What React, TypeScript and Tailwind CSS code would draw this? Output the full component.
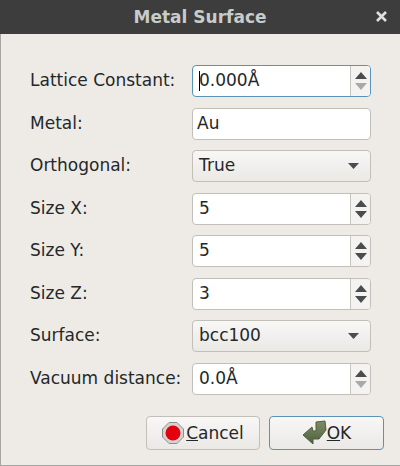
import { ReactNode } from "react";

const Spin = ({ value, focused, dim, caret }: { value: string; focused?: boolean; dim?: boolean; caret?: boolean }) => (
  <div className={`flex h-[32px] w-[179px] overflow-hidden rounded-[4px] border bg-white ${focused ? "border-[#5b93b8]" : "border-[#c2bfb9]"}`}>
    <div className="relative flex flex-1 items-center pl-[6px]">
      {caret && <span className="absolute left-[6px] top-[5px] h-[20px] w-px bg-black" />}
      {value}
    </div>
    <div className="flex w-[20px] flex-col items-center justify-center gap-[4px] border-l border-[#c8c5bf] bg-[#f4f3f1]">
      <svg width="12" height="7" viewBox="0 0 12 7"><path d="M6 0 12 7H0z" fill="#4a4d4d" /></svg>
      <svg width="12" height="7" viewBox="0 0 12 7"><path d="M0 0h12L6 7z" fill={focused || dim ? "#a9a9a7" : "#4a4d4d"} /></svg>
    </div>
  </div>
);

const Combo = ({ value }: { value: string }) => (
  <div className="flex h-[32px] w-[179px] items-center justify-between rounded-[4px] border border-[#c2bfb9] bg-gradient-to-b from-[#f8f7f6] to-[#ebe9e6] pl-[6px] pr-[11px]">
    {value}
    <svg width="11" height="6" viewBox="0 0 11 6"><path d="M0 0h11L5.500 6z" fill="#4a4d4d" /></svg>
  </div>
);

const Row = ({ label, children }: { label: string; children: ReactNode }) => (
  <div className="flex h-[32px] items-center justify-between">
    <span>{label}</span>
    {children}
  </div>
);

export default function App() {
  return (
    <div className="flex h-[466px] w-[400px] flex-col overflow-hidden border-b border-[#a8a6a2] bg-[#eeebe7] font-['DejaVu_Sans',sans-serif] text-[17px] text-[#23282a]">
      <div className="relative flex h-[34px] items-center justify-center bg-[#3d3d3d] pt-[1px] text-[17px] font-bold text-[#c8ccc9]">
        Metal Surface
        <span className="absolute right-[12px] top-[10px]">
          <svg width="13" height="13" viewBox="0 0 13 13"><path d="M2 2l9 9M11 2l-9 9" stroke="#e0e0de" strokeWidth="2.600" /></svg>
        </span>
      </div>
      <div className="flex flex-1 flex-col border-l border-[#a8a6a2] pl-[29px] pr-[29px] pt-[31px]">
        <div className="flex flex-col gap-[10.500px]">
          <Row label="Lattice Constant:"><Spin value="0.000Å" focused caret /></Row>
          <Row label="Metal:">
            <div className="flex h-[32px] w-[179px] items-center rounded-[4px] border border-[#c2bfb9] bg-white pl-[4px]">Au</div>
          </Row>
          <Row label="Orthogonal:"><Combo value="True" /></Row>
          <Row label="Size X:"><Spin value="5" /></Row>
          <Row label="Size Y:"><Spin value="5" /></Row>
          <Row label="Size Z:"><Spin value="3" /></Row>
          <Row label="Surface:"><Combo value="bcc100" /></Row>
          <Row label="Vacuum distance:"><Spin value="0.0Å" dim /></Row>
        </div>
        <div className="mt-[21px] mr-[-13px] flex justify-end gap-[9px]">
          <button className="flex h-[34px] w-[114px] items-center justify-center gap-[2px] rounded-[4px] border border-[#c2bfb9] bg-gradient-to-b from-[#f8f7f6] to-[#ebe9e6]">
            <svg width="22" height="22" viewBox="0 0 22 22">
              <path d="M7 .5h8L21.500 7v8L15 21.500H7L.5 15V7z" fill="#d4d3d0" stroke="#8f8e8b" />
              <circle cx="11" cy="11" r="7.500" fill="#e4000f" />
            </svg>
            <span className="pt-[2px]"><span className="underline">C</span>ancel</span>
          </button>
          <button className="flex h-[34px] w-[115px] items-center justify-center rounded-[4px] border border-[#5b93b8] bg-gradient-to-b from-[#f8f7f6] to-[#ebe9e6]">
            <svg width="25" height="25" viewBox="0 0 25 25">
              <defs>
                <linearGradient id="okArrow" x1="0" y1="0" x2="0" y2="1">
                  <stop offset="0" stopColor="#7d8e66" />
                  <stop offset="1" stopColor="#4f5f3d" />
                </linearGradient>
              </defs>
              <path d="M14 2 23 1 24 10 17 19H11V24L1 15 10 7 11 11H14Z" fill="url(#okArrow)" stroke="#4f5f3d" strokeWidth="1" strokeLinejoin="round" />
            </svg>
            <span className="pt-[2px]"><span className="underline">O</span>K</span>
          </button>
        </div>
      </div>
    </div>
  );
}
